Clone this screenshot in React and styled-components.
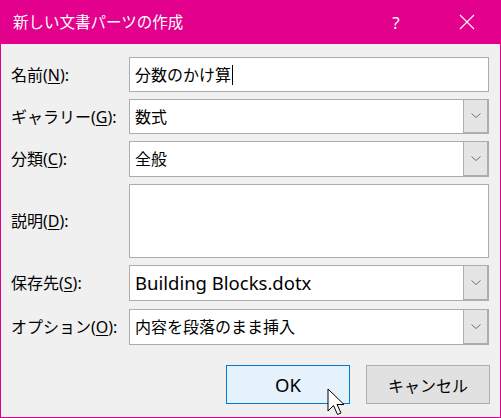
import React from "react";
import styled, { createGlobalStyle } from "styled-components";

const GlobalStyle = createGlobalStyle`
  html, body { margin: 0; padding: 0; background: #f0f0f0; }
  * { box-sizing: border-box; }
`;

const PINK = "#e3008c";
const FONT = `"Noto Sans", "Noto Sans CJK JP", sans-serif`;

const Window = styled.div`
  position: relative;
  width: 501px;
  height: 418px;
  background: #f0f0f0;
  border: 1px solid ${PINK};
  border-top: none;
  display: flex;
  flex-direction: column;
  font-family: ${FONT};
  color: #000;
  overflow: hidden;
`;

const TitleBar = styled.div`
  height: 44px;
  background: ${PINK};
  display: flex;
  align-items: center;
  padding: 0 10px 0 12px;
  color: #fff;
  flex-shrink: 0;
`;

const Title = styled.div`
  font-size: 15.5px;
  line-height: 20px;
  flex: 1;
`;

const CaptionButton = styled.div`
  width: 46px;
  height: 44px;
  display: flex;
  align-items: center;
  justify-content: center;
  color: #fff;
  font-size: 17px;
  margin-left: ${(p) => p.$gap || 0}px;
`;

const Body = styled.div`
  padding: 13px 10px 0 10px;
  display: flex;
  flex-direction: column;
`;

const Form = styled.div`
  display: grid;
  grid-template-columns: 118px 360px;
  row-gap: 7px;
`;

const Label = styled.div`
  font-size: 16px;
  line-height: 20px;
  display: flex;
  align-items: center;
  height: ${(p) => p.$h}px;
  margin-top: ${(p) => p.$mt || 0}px;
  white-space: nowrap;
`;

const Key = styled.span`
  text-decoration: underline;
  text-underline-offset: 2px;
`;

const Latin = styled.span`
  font-family: "Noto Sans", sans-serif;
  font-size: 18.5px;
  line-height: 22px;
`;

const Field = styled.div`
  height: ${(p) => p.$h}px;
  margin-top: ${(p) => p.$mt || 0}px;
  background: #fff;
  border: 1px solid #adadad;
  display: flex;
  align-items: center;
  font-size: 16px;
  line-height: 22px;
  padding-left: 5px;
`;

const Caret = styled.span`
  display: inline-block;
  width: 1px;
  height: 20px;
  background: #000;
  margin-left: 1px;
`;

const Value = styled.div`
  flex: 1;
  white-space: nowrap;
  display: flex;
  align-items: center;
`;

const DropButton = styled.div`
  width: 26px;
  align-self: stretch;
  background: #e5e5e5;
  border-style: solid;
  border-color: #adadad;
  border-width: 1px 2px 2px 1px;
  margin: -1px -1px -1px 0;
  display: flex;
  align-items: center;
  justify-content: center;
`;

const ButtonRow = styled.div`
  display: flex;
  justify-content: flex-end;
  gap: 16px;
  margin-top: 20px;
`;

const Button = styled.div`
  width: 124px;
  height: 39px;
  display: flex;
  align-items: center;
  justify-content: center;
  font-size: 16px;
  background: ${(p) => (p.$primary ? "#e5f1fb" : "#e1e1e1")};
  border: 1px solid ${(p) => (p.$primary ? "#0078d7" : "#adadad")};
`;

const Cursor = styled.svg`
  position: absolute;
  left: 326px;
  top: 388px;
`;

const Chevron = () => (
  <svg width="10" height="6" viewBox="0 0 10 6">
    <path d="M0.5 0.5 L5 4.5 L9.5 0.5" fill="none" stroke="#707070" strokeWidth="1" />
  </svg>
);

const Select = ({ h, mt, children }) => (
  <Field $h={h} $mt={mt}>
    <Value>{children}</Value>
    <DropButton>
      <Chevron />
    </DropButton>
  </Field>
);

export default function App() {
  return (
    <>
      <GlobalStyle />
      <Window>
        <TitleBar>
          <Title>新しい文書パーツの作成</Title>
          <CaptionButton>?</CaptionButton>
          <CaptionButton $gap={25}>
            <svg width="16" height="16" viewBox="0 0 16 16">
              <path d="M1 1 L15 15 M15 1 L1 15" stroke="#fff" strokeWidth="1.1" fill="none" />
            </svg>
          </CaptionButton>
        </TitleBar>
        <Body>
          <Form>
            <Label $h={35}>名前(<Key>N</Key>):</Label>
            <Field $h={35}>
              <Value>
                分数のかけ算<Caret />
              </Value>
            </Field>

            <Label $h={35}>ギャラリー(<Key>G</Key>):</Label>
            <Select h={35}>数式</Select>

            <Label $h={36}>分類(<Key>C</Key>):</Label>
            <Select h={36}>全般</Select>

            <Label $h={74}>説明(<Key>D</Key>):</Label>
            <Field $h={74} />

            <Label $h={36}>保存先(<Key>S</Key>):</Label>
            <Select h={36}>
              <Latin>Building Blocks.dotx</Latin>
            </Select>

            <Label $h={36} $mt={1}>オプション(<Key>O</Key>):</Label>
            <Select h={36} mt={1}>内容を段落のまま挿入</Select>
          </Form>
          <ButtonRow>
            <Button $primary>
              <Latin>OK</Latin>
            </Button>
            <Button>キャンセル</Button>
          </ButtonRow>
        </Body>
        <Cursor width="20" height="30" viewBox="0 0 20 30">
          <path
            d="M1 1 L1 23 L6.5 17.5 L10.5 26.5 L14 25 L10 16.5 L17 16.5 Z"
            fill="#fff"
            stroke="#000"
            strokeWidth="1"
          />
        </Cursor>
      </Window>
    </>
  );
}
